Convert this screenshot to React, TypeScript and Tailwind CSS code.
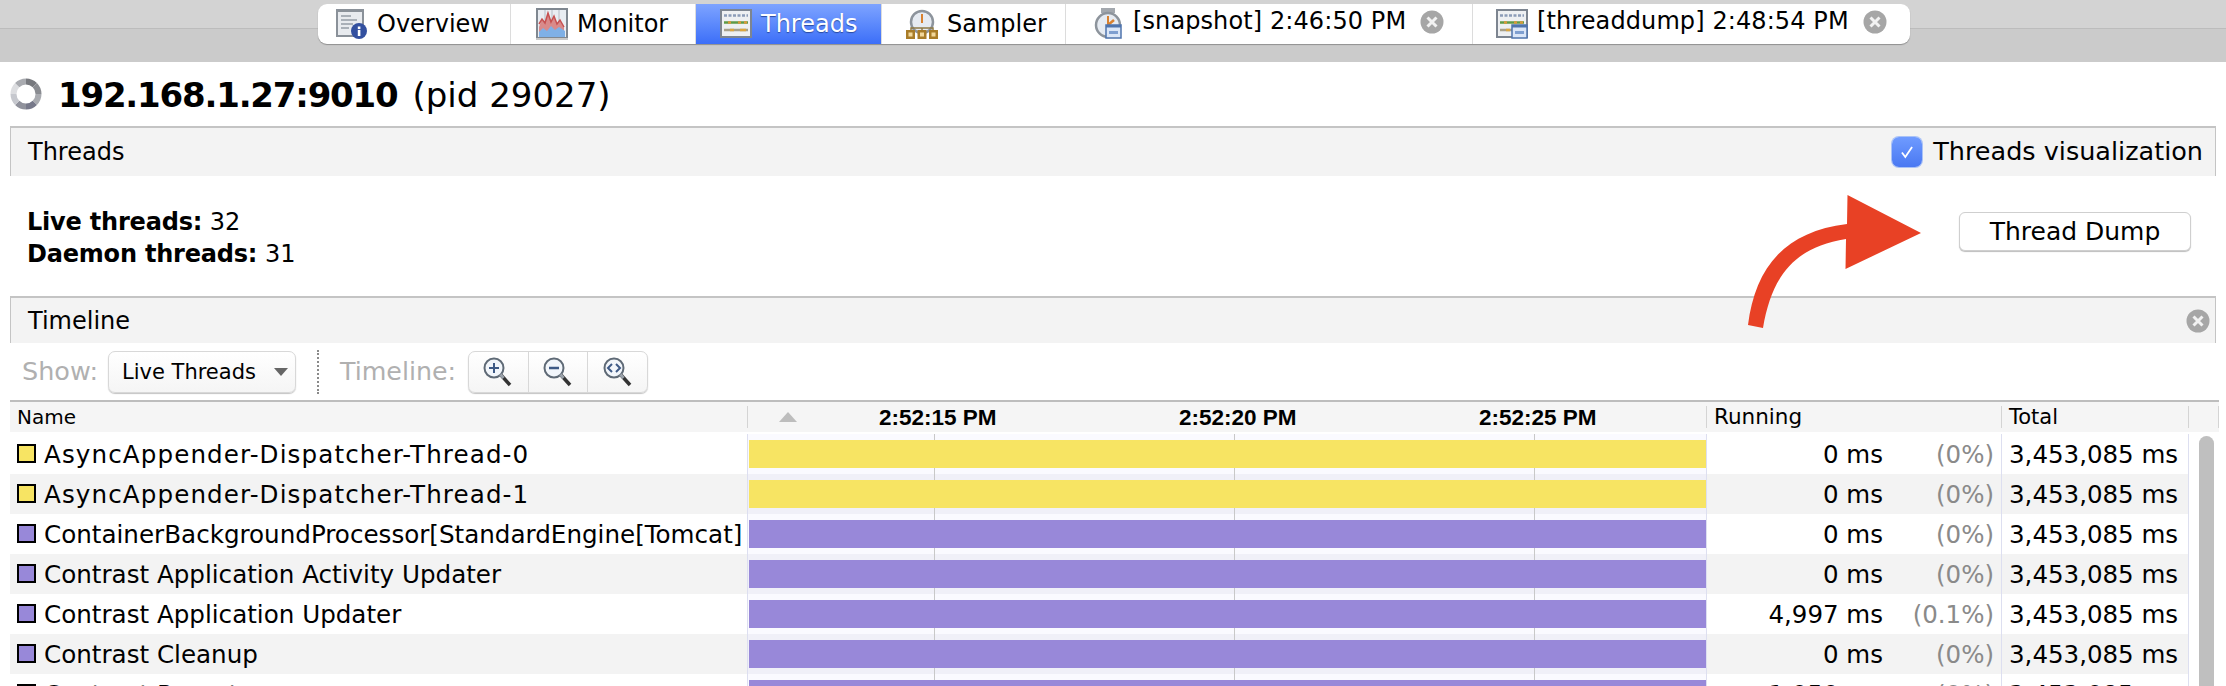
const FONT = "font-['DejaVu_Sans',sans-serif]";

type Row = {
  name: string;
  color: 'yellow' | 'purple';
  running: string;
  pct: string;
  wide?: boolean;
};

const rows: Row[] = [
  { name: 'AsyncAppender-Dispatcher-Thread-0', color: 'yellow', running: '0 ms', pct: '(0%)', wide: true },
  { name: 'AsyncAppender-Dispatcher-Thread-1', color: 'yellow', running: '0 ms', pct: '(0%)', wide: true },
  { name: 'ContainerBackgroundProcessor[StandardEngine[Tomcat]', color: 'purple', running: '0 ms', pct: '(0%)' },
  { name: 'Contrast Application Activity Updater', color: 'purple', running: '0 ms', pct: '(0%)' },
  { name: 'Contrast Application Updater', color: 'purple', running: '4,997 ms', pct: '(0.1%)' },
  { name: 'Contrast Cleanup', color: 'purple', running: '0 ms', pct: '(0%)' },
  { name: 'Contrast Reporter', color: 'purple', running: '1,050 ms', pct: '(0%)' },
];

function MiniWindow({ x, y }: { x: number; y: number }) {
  return (
    <g>
      <rect x={x} y={y} width="15" height="13" fill="#dbe6f7" stroke="#4f74ad" strokeWidth="1.5" />
      <rect x={x} y={y} width="15" height="2.5" fill="#4f74ad" />
      <rect x={x + 3} y={y + 6} width="9" height="3" fill="#7f9fd0" />
    </g>
  );
}

function OverviewIcon() {
  return (
    <svg viewBox="0 0 32 30" className="h-[30px] w-[32px] shrink-0" aria-hidden="true">
      <rect x="1" y="1" width="26" height="26" fill="#e8ebef" stroke="#8a9199" strokeWidth="2" />
      <rect x="0" y="0" width="28" height="3" fill="#8a9199" />
      <path d="M5 7h10M5 11h16M5 15h12M5 19h8" stroke="#a9b0b8" strokeWidth="2" />
      <circle cx="23" cy="22" r="8" fill="#33509f" />
      <rect x="21.8" y="17.5" width="2.6" height="2.6" fill="#fff" />
      <rect x="21.8" y="21" width="2.6" height="6" fill="#fff" />
    </svg>
  );
}

function MonitorIcon() {
  return (
    <svg viewBox="0 0 32 32" className="h-[32px] w-[32px] shrink-0" aria-hidden="true">
      <rect x="1" y="1" width="30" height="29" fill="#e9edf2" stroke="#7f8790" strokeWidth="2" />
      <path d="M9 2v27M16 2v27M23 2v27" stroke="#c6ccd4" strokeWidth="1.5" />
      <path d="M3 19l3-8 3 4 3-10 3 9 3-6 3 8 3-4 4 7v10H3z" fill="#d98a8a" />
      <path d="M3 16l3-5 3 4 3-10 3 9 3-6 3 8 3-4 4 7" fill="none" stroke="#c65050" strokeWidth="1.5" />
      <path d="M3 24l4-4 4 3 4-5 4 4 4-3 6 4v6H3z" fill="#7fb0e6" />
      <rect x="0" y="30" width="32" height="2" fill="#c8c8c8" />
    </svg>
  );
}

function ThreadsIcon({ withWindow = false }: { withWindow?: boolean }) {
  return (
    <svg viewBox="0 0 32 30" className="h-[30px] w-[32px] shrink-0" aria-hidden="true">
      <rect x="1" y="1" width="30" height="27" fill="#eef0f2" stroke="#7d8590" strokeWidth="2" />
      <path d="M4 6.5h24" stroke="#8c9cb8" strokeWidth="2.5" strokeDasharray="3 1.5" />
      <path d="M4 13.5h24" stroke="#5f9a45" strokeWidth="2.5" />
      <path d="M8 13.5h3M18 13.5h3M24 13.5h3" stroke="#d99a3a" strokeWidth="2.5" />
      <path d="M4 21h24" stroke="#a7a08a" strokeWidth="2.5" />
      <path d="M10 21h4M20 21h6" stroke="#dba640" strokeWidth="2.5" />
      {withWindow && <MiniWindow x={16} y={16} />}
    </svg>
  );
}

function ClockFace({ r = 11, cy = 13 }: { r?: number; cy?: number }) {
  return (
    <g>
      <circle cx="16" cy={cy} r={r} fill="#e6ebf2" stroke="#8d949c" strokeWidth="2.5" />
      <path d={`M16 ${cy - r + 3}v${r - 2}`} stroke="#d9812f" strokeWidth="2" />
    </g>
  );
}

function SamplerIcon() {
  return (
    <svg viewBox="0 0 32 30" className="h-[30px] w-[32px] shrink-0" aria-hidden="true">
      <ClockFace />
      <path d="M5 22V19h22v3M16 19v3" fill="none" stroke="#8f7a45" strokeWidth="1.5" />
      {[0, 11.5, 23].map((x) => (
        <g key={x}>
          <rect x={x} y="21" width="9" height="9" fill="#a97c28" />
          <rect x={x + 2.5} y="23.5" width="4" height="4" fill="#f2d79a" />
        </g>
      ))}
    </svg>
  );
}

function SnapshotIcon() {
  return (
    <svg viewBox="0 0 30 32" className="h-[32px] w-[30px] shrink-0" aria-hidden="true">
      <rect x="7" y="0" width="14" height="5" fill="#a3a8ae" />
      <g transform="translate(-2 2)">
        <ClockFace r={12} cy={15} />
        <path d="M16 15l6-5" stroke="#d9812f" strokeWidth="2.5" />
      </g>
      <MiniWindow x={12} y={17} />
    </svg>
  );
}

function CloseIcon() {
  return (
    <svg viewBox="0 0 24 24" className="h-[24px] w-[24px] shrink-0" aria-hidden="true">
      <circle cx="12" cy="12" r="11.5" fill="#a6a6a6" />
      <path d="M7.5 7.5l9 9M16.5 7.5l-9 9" stroke="#f2f2f2" strokeWidth="3" />
    </svg>
  );
}

function Spinner() {
  const arcs = [
    { d: 'M16 3.500a12.500 12.500 0 0 1 8.800 3.700', c: '#77797e' },
    { d: 'M24.800 7.200A12.500 12.500 0 0 1 28.500 16', c: '#8a8c91' },
    { d: 'M28.500 16a12.500 12.500 0 0 1-3.700 8.800', c: '#a9abb0' },
    { d: 'M24.800 24.800A12.500 12.500 0 0 1 16 28.500', c: '#77798a' },
    { d: 'M16 28.500a12.500 12.500 0 0 1-8.800-3.700', c: '#90929c' },
    { d: 'M7.200 24.800A12.500 12.500 0 0 1 3.500 16', c: '#c6c8ce' },
    { d: 'M3.500 16a12.500 12.500 0 0 1 3.700-8.800', c: '#dcdde0' },
    { d: 'M7.200 7.200A12.500 12.500 0 0 1 16 3.500', c: '#a9abb0' },
  ];
  return (
    <svg viewBox="0 0 32 32" className="h-[32px] w-[32px] shrink-0" aria-hidden="true">
      {arcs.map((a) => (
        <path key={a.d} d={a.d} fill="none" stroke={a.c} strokeWidth="6" />
      ))}
    </svg>
  );
}

function ZoomIcon({ glyph }: { glyph: 'in' | 'out' | 'fit' }) {
  return (
    <svg viewBox="0 0 32 32" className="h-[32px] w-[32px]" aria-hidden="true">
      <circle cx="12" cy="12" r="9.5" fill="#f2f6fb" stroke="#5f6a76" strokeWidth="2" />
      <path d="M19 19l9 10" stroke="#333" strokeWidth="3.5" />
      <path d="M18.500 18.500l3 3.500" stroke="#9aa2ab" strokeWidth="3" />
      {glyph === 'in' && <path d="M7 12h10M12 7v10" stroke="#3e5a86" strokeWidth="2" />}
      {glyph === 'out' && <path d="M7 12h10" stroke="#3e5a86" strokeWidth="2.5" />}
      {glyph === 'fit' && <path d="M10 8l-4 4 4 4M14 8l4 4-4 4" fill="none" stroke="#3e5a86" strokeWidth="2" />}
    </svg>
  );
}

function Tab({
  left,
  width,
  icon,
  label,
  active,
  close,
}: {
  left: number;
  width: number;
  icon: React.ReactNode;
  label: string;
  active?: boolean;
  close?: boolean;
}) {
  return (
    <div
      style={{ width, paddingLeft: left }}
      className={`flex h-full shrink-0 items-center border-r border-[#dcdcdc] last:border-r-0 ${
        active
          ? 'bg-gradient-to-b from-[#7ea3ff] to-[#3c6ef8] text-white [text-shadow:0_1px_1px_#2a4aa0]'
          : 'text-black'
      }`}
    >
      {icon}
      <span className={`ml-[9px] whitespace-nowrap ${close ? '-mt-[6px] tracking-[0.1px]' : ''}`}>{label}</span>
      {close && (
        <span className="-mt-[5px] ml-[14px]">
          <CloseIcon />
        </span>
      )}
    </div>
  );
}

function SectionHeader({ title, children }: { title: string; children?: React.ReactNode }) {
  return (
    <div className="mx-[10px] flex items-center justify-between border-x border-t-2 border-x-[#c4c4c4] border-t-[#c4c4c4] bg-[#f3f3f3] pl-[17px] text-[24px] text-black">
      <span>{title}</span>
      {children}
    </div>
  );
}

function ThreadRow({ row, index }: { row: Row; index: number }) {
  const even = index % 2 === 1;
  const yellow = row.color === 'yellow';
  return (
    <div className={`flex h-[40px] shrink-0 text-[24.500px] ${even ? 'bg-[#f3f3f3]' : 'bg-white'}`}>
      <div className="flex w-[737px] shrink-0 items-center overflow-hidden whitespace-nowrap pl-[7px]">
        <span
          className={`-mt-[2px] h-[19px] w-[19px] shrink-0 border-2 border-black ${
            yellow ? 'bg-[#f7e463]' : 'bg-[#9888d9]'
          }`}
        />
        <span className={`ml-[8px] mt-[2px] text-[24.600px] ${row.wide ? 'tracking-[1.1px]' : ''}`}>{row.name}</span>
      </div>
      <div
        className={`relative w-[960px] shrink-0 border-x border-[#dddff0] py-[6px] pl-px ${
          even ? 'bg-[#f0f0f8]' : 'bg-[#fafaff]'
        }`}
      >
        <div className="absolute top-0 bottom-0 left-[186px] w-px bg-[#c8c8c8]" />
        <div className="absolute top-0 bottom-0 left-[486px] w-px bg-[#c8c8c8]" />
        <div className="absolute top-0 bottom-0 left-[786px] w-px bg-[#c8c8c8]" />
        <div className={`relative h-full ${yellow ? 'bg-[#f7e463]' : 'bg-[#9888d9]'}`} />
      </div>
      <div className="flex w-[294px] shrink-0 items-center pt-[2px]">
        <span className="w-[176px] whitespace-nowrap text-right">{row.running}</span>
        <span className="w-[111px] whitespace-nowrap text-right text-[#8a8a8a]">{row.pct}</span>
      </div>
      <div className="flex w-[188px] shrink-0 items-center whitespace-nowrap border-x border-[#dddff0] pl-[7px] pt-[2px]">
        3,453,085 ms
      </div>
    </div>
  );
}

export default function App() {
  return (
    <div className={`relative h-[686px] w-[2226px] overflow-hidden bg-white text-[24px] leading-none text-black ${FONT}`}>
      <div className="h-[62px] bg-[linear-gradient(#d3d3d3_0,#d3d3d3_28px,#bcbcbc_28px,#bcbcbc_29px,#cbcbcb_29px)] pt-[4px]">
        <div className="ml-[318px] flex h-[40px] w-[1592px] overflow-hidden rounded-[9px] bg-white shadow-[0_1px_1px_#8f8f8f]">
          <Tab left={18} width={193} icon={<OverviewIcon />} label="Overview" />
          <Tab left={25} width={185} icon={<MonitorIcon />} label="Monitor" />
          <Tab left={24} width={186} icon={<ThreadsIcon />} label="Threads" active />
          <Tab left={24} width={184} icon={<SamplerIcon />} label="Sampler" />
          <Tab left={28} width={407} icon={<SnapshotIcon />} label="[snapshot] 2:46:50 PM" close />
          <Tab left={23} width={437} icon={<ThreadsIcon withWindow />} label="[threaddump] 2:48:54 PM" close />
        </div>
      </div>

      <div className="flex h-[64px] items-center pl-[10px]">
        <Spinner />
        <span className="ml-[16px] mt-[2px] text-[34px] font-bold -tracking-[1.2px]">192.168.1.27:9010</span>
        <span className="ml-[15px] mt-[2px] text-[34px]">(pid 29027)</span>
      </div>

      <SectionHeader title="Threads">
        <div className="flex h-[48px] items-center pr-[12px]">
          <span className="flex h-[30px] w-[30px] items-center justify-center rounded-[7px] bg-gradient-to-b from-[#6f9bff] to-[#4a78f2] shadow-[0_0_0_1px_#a9c2f7]">
            <svg viewBox="0 0 16 16" className="h-[18px] w-[18px]" aria-hidden="true">
              <path d="M3.500 8.500l3 4 6-9" fill="none" stroke="#fff" strokeWidth="1.600" />
            </svg>
          </span>
          <span className="ml-[11px] text-[25.500px]">Threads visualization</span>
        </div>
      </SectionHeader>

      <div className="flex h-[120px] justify-between pl-[27px] pr-[35px]">
        <div className="pt-[30px] leading-[32px]">
          <div>
            <b className="-tracking-[0.2px]">Live threads:</b> 32
          </div>
          <div>
            <b className="-tracking-[0.2px]">Daemon threads:</b> 31
          </div>
        </div>
        <button className="mt-[36px] h-[39px] w-[232px] rounded-[6px] border border-[#cfcfcf] bg-white text-[25px] shadow-[0_1px_1px_#bdbdbd]">
          Thread Dump
        </button>
      </div>

      <SectionHeader title="Timeline">
        <div className="flex h-[45px] items-center pr-[5px]">
          <CloseIcon />
        </div>
      </SectionHeader>

      <div className="flex h-[57px] items-center pl-[22px]">
        <span className="w-[73px] text-[25.500px] text-[#b0b0b0]">Show:</span>
        <div className="ml-[13px] flex h-[42px] w-[188px] items-center justify-between rounded-[7px] border border-[#d8d8d8] bg-gradient-to-b from-white to-[#f5f5f5] pl-[13px] pr-[7px] text-[21px] shadow-[0_1px_1px_#c4c4c4]">
          <span className="mt-[2px]">Live Threads</span>
          <span className="h-0 w-0 border-x-[7px] border-t-[8px] border-x-transparent border-t-[#666]" />
        </div>
        <div className="ml-[21px] h-[44px] border-l-2 border-dotted border-[#8a8a8a]" />
        <span className="ml-[21px] w-[114px] text-[25.300px] text-[#b0b0b0]">Timeline:</span>
        <div className="ml-[14px] flex h-[42px] w-[180px] rounded-[7px] border border-[#d8d8d8] bg-gradient-to-b from-white to-[#f5f5f5] shadow-[0_1px_1px_#c4c4c4]">
          <span className="flex flex-1 items-center justify-center border-r border-[#d8d8d8]"><ZoomIcon glyph="in" /></span>
          <span className="flex flex-1 items-center justify-center border-r border-[#d8d8d8]"><ZoomIcon glyph="out" /></span>
          <span className="flex flex-1 items-center justify-center"><ZoomIcon glyph="fit" /></span>
        </div>
      </div>

      <div className="ml-[10px] w-[2209px]">
        <div className="flex h-[32px] items-center border-t-2 border-[#bdbdbd] bg-[#f5f5f5] text-[20px]">
          <div className="flex h-[22px] w-[737px] shrink-0 items-center pl-[7px]">Name</div>
          <div className="relative h-[22px] w-[960px] shrink-0 border-x border-[#d4d4d4]">
            <span className="absolute left-[31px] top-[6px] h-0 w-0 border-x-[9px] border-b-[10px] border-x-transparent border-b-[#bdbdbd]" />
            <span className="absolute left-[131px] top-[1px] font-['Liberation_Sans',sans-serif] text-[22.500px] font-bold">2:52:15 PM</span>
            <span className="absolute left-[431px] top-[1px] font-['Liberation_Sans',sans-serif] text-[22.500px] font-bold">2:52:20 PM</span>
            <span className="absolute left-[731px] top-[1px] font-['Liberation_Sans',sans-serif] text-[22.500px] font-bold">2:52:25 PM</span>
          </div>
          <div className="flex h-[22px] w-[294px] shrink-0 items-center pl-[7px] text-[21.500px]">Running</div>
          <div className="flex h-[22px] w-[188px] shrink-0 items-center border-x border-[#d4d4d4] pl-[7px] text-[21px]">Total</div>
          <div className="h-[22px] flex-1 border-r border-[#d4d4d4]" />
        </div>

        <div className="flex pt-[2px]">
          <div className="flex w-[2179px] flex-col">
            {rows.map((row, i) => (
              <ThreadRow key={row.name} row={row} index={i} />
            ))}
          </div>
          <div className="flex-1 pl-[10px] pr-[5px] pt-[2px]">
            <div className="h-[400px] rounded-full bg-[#bfbfbf]" />
          </div>
        </div>
      </div>

      <svg
        viewBox="1740 190 190 145"
        className="absolute left-[1740px] top-[190px] h-[145px] w-[190px]"
        aria-hidden="true"
      >
        <path
          d="M1748 325C1755 270 1782 232 1847 224L1847.500 195L1921 233L1845.500 269L1846 239C1795 247 1772 275 1763 328Z"
          fill="#e84125"
        />
      </svg>
    </div>
  );
}
